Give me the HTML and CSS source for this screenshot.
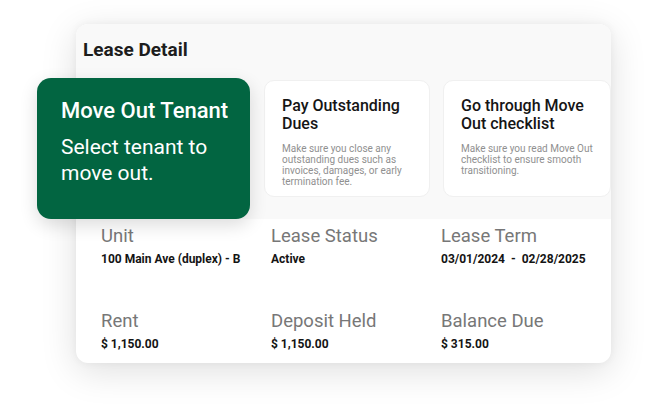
FILE: index.html
```html
<!DOCTYPE html>
<html>
<head>
<meta charset="utf-8">
<link rel="stylesheet" href="styles.css">
</head>
<body>
<div class="stage">
  <div class="lease">
    <div class="lease-top">
      <h1 class="lease-title">Lease Detail</h1>
      <div class="steps">
        <div class="step step-active">
          <div class="step-active-title">Move Out Tenant</div>
          <div class="step-active-text">Select tenant to move out.</div>
        </div>
        <div class="step step-pay">
          <div class="step-title">Pay Outstanding Dues</div>
          <div class="step-text">Make sure you close any outstanding dues such as invoices, damages, or early termination fee.</div>
        </div>
        <div class="step step-check">
          <div class="step-title">Go through Move Out checklist</div>
          <div class="step-text">Make sure you read Move Out checklist to ensure smooth transitioning.</div>
        </div>
      </div>
    </div>
    <div class="details">
      <div class="field"><div class="label">Unit</div><div class="value">100 Main Ave (duplex) - B</div></div>
      <div class="field"><div class="label">Lease Status</div><div class="value">Active</div></div>
      <div class="field"><div class="label">Lease Term</div><div class="value">03/01/2024  -  02/28/2025</div></div>
      <div class="field"><div class="label">Rent</div><div class="value">$ 1,150.00</div></div>
      <div class="field"><div class="label">Deposit Held</div><div class="value">$ 1,150.00</div></div>
      <div class="field"><div class="label">Balance Due</div><div class="value">$ 315.00</div></div>
    </div>
  </div>
</div>
</body>
</html>
```
FILE: styles.css
```css
html, body {
  margin: 0;
  padding: 0;
  background: #ffffff;
}
body {
  width: 647px;
  height: 405px;
  overflow: hidden;
  font-family: Roboto, "Liberation Sans", Arial, sans-serif;
}
.stage {
  padding: 24px 0 0 76px;
}
.lease {
  width: 535px;
  height: 339px;
  border-radius: 12px;
  background: #ffffff;
  box-shadow: 0 8px 36px rgba(0, 0, 0, 0.13), 0 0 8px rgba(0, 0, 0, 0.05);
  display: flex;
  flex-direction: column;
}
.lease-top {
  background: #f9f9f9;
  border-radius: 12px 12px 0 0;
  padding: 15px 0 0 0;
}
.lease-title {
  margin: 0 0 0 7px;
  font-size: 19px;
  line-height: 22px;
  font-weight: 700;
  color: #1d1d1d;
}
.steps {
  display: flex;
  align-items: flex-start;
  margin-top: 17px;
  margin-left: -39px;
}
.step {
  box-sizing: border-box;
}
.step-active {
  width: 213px;
  height: 141px;
  background: #026541;
  border-radius: 14px;
  padding: 20px 10px 0 24px;
  color: #ffffff;
  box-shadow: 0 6px 18px rgba(0, 0, 0, 0.14);
  position: relative;
  z-index: 2;
}
.step-active-title {
  font-size: 22px;
  line-height: 26px;
  font-weight: 500;
}
.step-active-text {
  margin-top: 10px;
  font-size: 21px;
  line-height: 26px;
  font-weight: 400;
}
.step-pay,
.step-check {
  margin-top: 2px;
  height: 117px;
  background: #ffffff;
  border: 1px solid #f0f0f0;
  border-radius: 10px;
  padding: 16px 8px 0 17px;
}
.step-pay {
  width: 166px;
  margin-left: 14px;
}
.step-check {
  width: 168px;
  margin-left: 13px;
}
.step-title {
  font-size: 16px;
  line-height: 18px;
  font-weight: 500;
  color: #151515;
}
.step-text {
  margin-top: 10px;
  font-size: 10px;
  line-height: 11px;
  color: #909090;
}
.details {
  display: grid;
  grid-template-columns: 170px 170px 170px;
  grid-auto-rows: 85px;
  padding: 6px 0 0 25px;
}
.label {
  font-size: 18.5px;
  line-height: 22px;
  color: #777777;
}
.value {
  margin-top: 5px;
  font-size: 12px;
  line-height: 14px;
  font-weight: 700;
  color: #141414;
  white-space: pre;
}
```
